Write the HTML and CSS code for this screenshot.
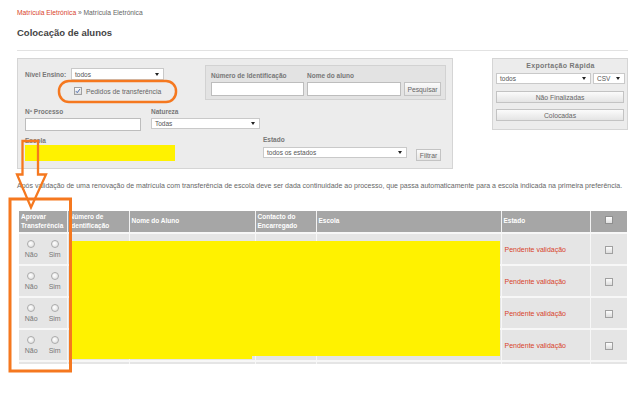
FILE: index.html
```html
<!DOCTYPE html>
<html lang="pt">
<head>
<meta charset="utf-8">
<title>Colocação de alunos</title>
<link rel="stylesheet" href="styles.css">
</head>
<body>
<div class="page">
  <div class="crumbs"><span class="link">Matrícula Eletrónica</span> » Matrícula Eletrónica</div>
  <h1 class="title">Colocação de alunos</h1>
  <div class="rule"></div>

  <div class="top">
    <div class="filters">
      <div class="frow1">
        <div class="nivel">
          <div class="nivel-line">
            <span class="lbl nivel-lbl">Nível Ensino:</span>
            <div class="sel sel-nivel"><span>todos</span><span class="caret"></span></div>
          </div>
          <div class="check-line">
            <span class="cb"><svg viewBox="0 0 8 8" width="6" height="6"><path d="M1.2 4.2 L3 6.2 L6.8 1.2" fill="none" stroke="#3a5fa8" stroke-width="1.2"/></svg></span>
            <span>Pedidos de transferência</span>
          </div>
        </div>
        <div class="search">
          <div class="sf">
            <span class="lbl">Número de Identificação</span>
            <div class="inp inp-num"></div>
          </div>
          <div class="sf">
            <span class="lbl">Nome do aluno</span>
            <div class="inp inp-nome"></div>
          </div>
          <div class="btn btn-pesq">Pesquisar</div>
        </div>
      </div>
      <div class="frow2">
        <div class="sf">
          <span class="lbl">Nº Processo</span>
          <div class="inp inp-proc"></div>
        </div>
        <div class="sf">
          <span class="lbl">Natureza</span>
          <div class="sel sel-nat"><span>Todas</span><span class="caret"></span></div>
        </div>
      </div>
      <div class="frow3">
        <div class="sf escola">
          <span class="lbl">Escola</span>
          <div class="redacted"></div>
        </div>
        <div class="sf estado">
          <span class="lbl">Estado</span>
          <div class="estado-line">
            <div class="sel sel-estado"><span>todos os estados</span><span class="caret"></span></div>
            <div class="btn btn-filtrar">Filtrar</div>
          </div>
        </div>
      </div>
    </div>

    <div class="export">
      <div class="ex-title">Exportação Rápida</div>
      <div class="ex-row">
        <div class="sel sel-todos"><span>todos</span><span class="caret"></span></div>
        <div class="sel sel-csv"><span>CSV</span><span class="caret"></span></div>
      </div>
      <div class="btn ex-btn">Não Finalizadas</div>
      <div class="btn ex-btn ex-btn2">Colocadas</div>
    </div>
  </div>

  <p class="info">Após validação de uma renovação de matrícula com transferência de escola deve ser dada continuidade ao processo, que passa automaticamente para a escola indicada na primeira preferência.</p>

  <table class="grid">
    <colgroup>
      <col class="c1"><col class="c2"><col class="c3"><col class="c4"><col class="c5"><col class="c6"><col class="c7">
    </colgroup>
    <thead>
      <tr>
        <th>Aprovar<br>Transferência</th>
        <th>Número de<br>Identificação</th>
        <th>Nome do Aluno</th>
        <th>Contacto do<br>Encarregado</th>
        <th>Escola</th>
        <th>Estado</th>
        <th class="ck"><span class="cb cb-head"></span></th>
      </tr>
    </thead>
    <tbody>
      <tr>
        <td><div class="radios"><div class="ro"><span class="radio"></span>Não</div><div class="ro"><span class="radio"></span>Sim</div></div></td>
        <td></td><td></td><td></td><td></td>
        <td class="pend">Pendente validação</td>
        <td class="ck"><span class="cb"></span></td>
      </tr>
      <tr>
        <td><div class="radios"><div class="ro"><span class="radio"></span>Não</div><div class="ro"><span class="radio"></span>Sim</div></div></td>
        <td></td><td></td><td></td><td></td>
        <td class="pend">Pendente validação</td>
        <td class="ck"><span class="cb"></span></td>
      </tr>
      <tr>
        <td><div class="radios"><div class="ro"><span class="radio"></span>Não</div><div class="ro"><span class="radio"></span>Sim</div></div></td>
        <td></td><td></td><td></td><td></td>
        <td class="pend">Pendente validação</td>
        <td class="ck"><span class="cb"></span></td>
      </tr>
      <tr>
        <td><div class="radios"><div class="ro"><span class="radio"></span>Não</div><div class="ro"><span class="radio"></span>Sim</div></div></td>
        <td></td><td></td><td></td><td></td>
        <td class="pend">Pendente validação</td>
        <td class="ck"><span class="cb"></span></td>
      </tr>
      <tr class="tail"><td></td><td></td><td></td><td></td><td></td><td></td><td></td></tr>
    </tbody>
  </table>

  <div class="mask mask-a"></div>
  <div class="mask mask-b"></div>

  <svg class="annot" width="640" height="394" viewBox="0 0 640 394">
    <rect x="59" y="81" width="117" height="21" rx="10" ry="10" fill="none" stroke="#f5781f" stroke-width="2.5"/>
    <path d="M22.5 141 L38 141 L38 174.5 L46 174.5 L31 207.5 L17 174.5 L22.5 174.5 Z" fill="none" stroke="#f5781f" stroke-width="2.3" stroke-linejoin="miter"/>
    <rect x="10" y="199" width="60.5" height="172" fill="none" stroke="#f5781f" stroke-width="3"/>
  </svg>
</div>
</body>
</html>
```

FILE: styles.css
```css
* { box-sizing: border-box; }

body {
  margin: 0;
  background: #fff;
  font-family: "Liberation Sans", Arial, sans-serif;
  color: #555;
}

.page {
  position: relative;
  width: 640px;
  height: 394px;
  padding: 8px 12px 0 17px;
  overflow: hidden;
}

.crumbs {
  font-size: 6.7px;
  line-height: 10px;
  height: 10px;
  color: #666;
}
.crumbs .link { color: #d8432b; }

.title {
  margin: 9px 0 0;
  font-size: 9.5px;
  line-height: 12px;
  font-weight: bold;
  color: #444;
}

.rule {
  margin-top: 11px;
  height: 1px;
  width: 611px;
  background: #e2e2e2;
}

.top {
  display: flex;
  justify-content: space-between;
  align-items: flex-start;
  margin-top: 7px;
  width: 611px;
}

.filters {
  width: 436px;
  height: 111px;
  border: 1px solid #d5d5d5;
  background: #ececec;
  padding: 6px 6px 0 7px;
}

.lbl {
  font-size: 6.5px;
  font-weight: bold;
  color: #777;
  line-height: 9px;
  white-space: nowrap;
}

.frow1 {
  display: flex;
  justify-content: space-between;
  align-items: flex-start;
  height: 35px;
}

.nivel { margin-top: 3px; }
.nivel-line { display: flex; align-items: center; height: 12px; }
.nivel-lbl { width: 46px; }

.sel {
  display: flex;
  align-items: center;
  justify-content: space-between;
  height: 12px;
  border: 1px solid #c9c9c9;
  background: #fff;
  font-size: 6.5px;
  color: #555;
  padding: 0 4px 0 3px;
  white-space: nowrap;
}
.caret {
  width: 0;
  height: 0;
  border-left: 2.5px solid transparent;
  border-right: 2.5px solid transparent;
  border-top: 3px solid #222;
}
.sel-nivel { width: 93px; }

.check-line {
  display: flex;
  align-items: center;
  margin: 7px 0 0 49px;
  height: 8px;
  font-size: 6.8px;
  color: #666;
}

.cb {
  display: inline-flex;
  align-items: center;
  justify-content: center;
  width: 8px;
  height: 8px;
  border: 1px solid #a0a0a0;
  background: linear-gradient(#fdfdfd, #dcdcdc);
}
.check-line .cb { margin-right: 4px; }

.search {
  display: flex;
  align-items: flex-start;
  gap: 3px;
  width: 241px;
  height: 35px;
  border: 1px solid #d2d2d2;
  background: #e3e3e3;
  padding: 5px 4px 0 5px;
}

.sf { display: flex; flex-direction: column; gap: 2px; }

.inp {
  height: 14px;
  border: 1px solid #bdbdbd;
  background: #fff;
}
.inp-num { width: 93px; }
.inp-nome { width: 94px; }

.btn {
  display: flex;
  align-items: center;
  justify-content: center;
  border: 1px solid #c3c3c3;
  background: linear-gradient(#fbfbfb, #e4e4e4);
  font-size: 6.8px;
  color: #666;
  white-space: nowrap;
}
.btn-pesq { width: 37px; height: 14px; margin-top: 11px; }

.frow2 { display: flex; gap: 10px; margin-top: 7px; }
.inp-proc { width: 116px; height: 13px; }
.sel-nat { width: 109px; height: 11px; }

.frow3 { display: flex; align-items: flex-start; margin-top: 5px; }
.escola { gap: 0; width: 150px; }
.redacted { width: 150px; height: 16px; background: #fff200; }
.estado { margin-left: 88px; margin-top: -1px; gap: 3px; }
.estado-line { display: flex; align-items: flex-start; gap: 9px; }
.sel-estado { width: 144px; height: 11px; }
.btn-filtrar { width: 25px; height: 12px; margin-top: 2px; }

.export {
  width: 136px;
  height: 72px;
  border: 1px solid #d5d5d5;
  background: #ececec;
  padding: 2px 2px 0 3px;
}
.ex-title {
  text-align: center;
  font-size: 7px;
  font-weight: bold;
  line-height: 9px;
  color: #777;
  letter-spacing: 0.3px;
}
.ex-row { display: flex; gap: 2px; margin-top: 3px; }
.sel-todos { width: 95px; height: 11px; }
.sel-csv { width: 32px; height: 11px; }
.ex-btn { width: 128px; height: 12px; margin-top: 7px; }
.ex-btn2 { margin-top: 6px; }

.info {
  margin: 12px 0 0;
  font-size: 7px;
  line-height: 9px;
  color: #666;
  white-space: nowrap;
}

.grid {
  margin: 21px 0 0 2px;
  width: 608px;
  border-collapse: collapse;
  table-layout: fixed;
}
.c1 { width: 48px; }
.c2 { width: 62px; }
.c3 { width: 126px; }
.c4 { width: 61px; }
.c5 { width: 185px; }
.c6 { width: 89px; }
.c7 { width: 37px; }

.grid th {
  height: 22px;
  padding: 0 2px;
  background: #a6a6a6;
  color: #fff;
  font-size: 6.5px;
  font-weight: bold;
  line-height: 8.5px;
  text-align: left;
  vertical-align: middle;
  border-left: 1px solid #f2f2f2;
}
.grid th:first-child { border-left: 0; }

.grid td {
  height: 32px;
  padding: 0;
  background: #e5e5e5;
  border-top: 2px solid #f7f7f7;
  border-left: 1px solid #f7f7f7;
  vertical-align: middle;
}
.grid td:first-child { border-left: 0; }
.grid .tail td { height: 3px; }

.grid .ck { text-align: center; }
.cb-head { background: linear-gradient(#ffffff, #e0e0e0); border-color: #8f8f8f; }

.pend {
  padding-left: 3px !important;
  color: #d8432b;
  font-size: 7px;
}

.radios { display: flex; justify-content: center; gap: 11px; }
.ro {
  display: flex;
  flex-direction: column;
  align-items: center;
  gap: 3px;
  font-size: 7px;
  line-height: 8px;
  color: #777;
}
.radio {
  width: 8px;
  height: 8px;
  border-radius: 50%;
  border: 1px solid #ababab;
  background: radial-gradient(circle at 40% 40%, #ffffff, #dadada);
}

.mask {
  position: absolute;
  background: #fff200;
}
.mask-a { left: 72px; top: 241px; width: 428px; height: 115px; }
.mask-b { left: 72px; top: 241px; width: 180px; height: 118px; }

.annot {
  position: absolute;
  left: 0;
  top: 0;
  pointer-events: none;
}
```
